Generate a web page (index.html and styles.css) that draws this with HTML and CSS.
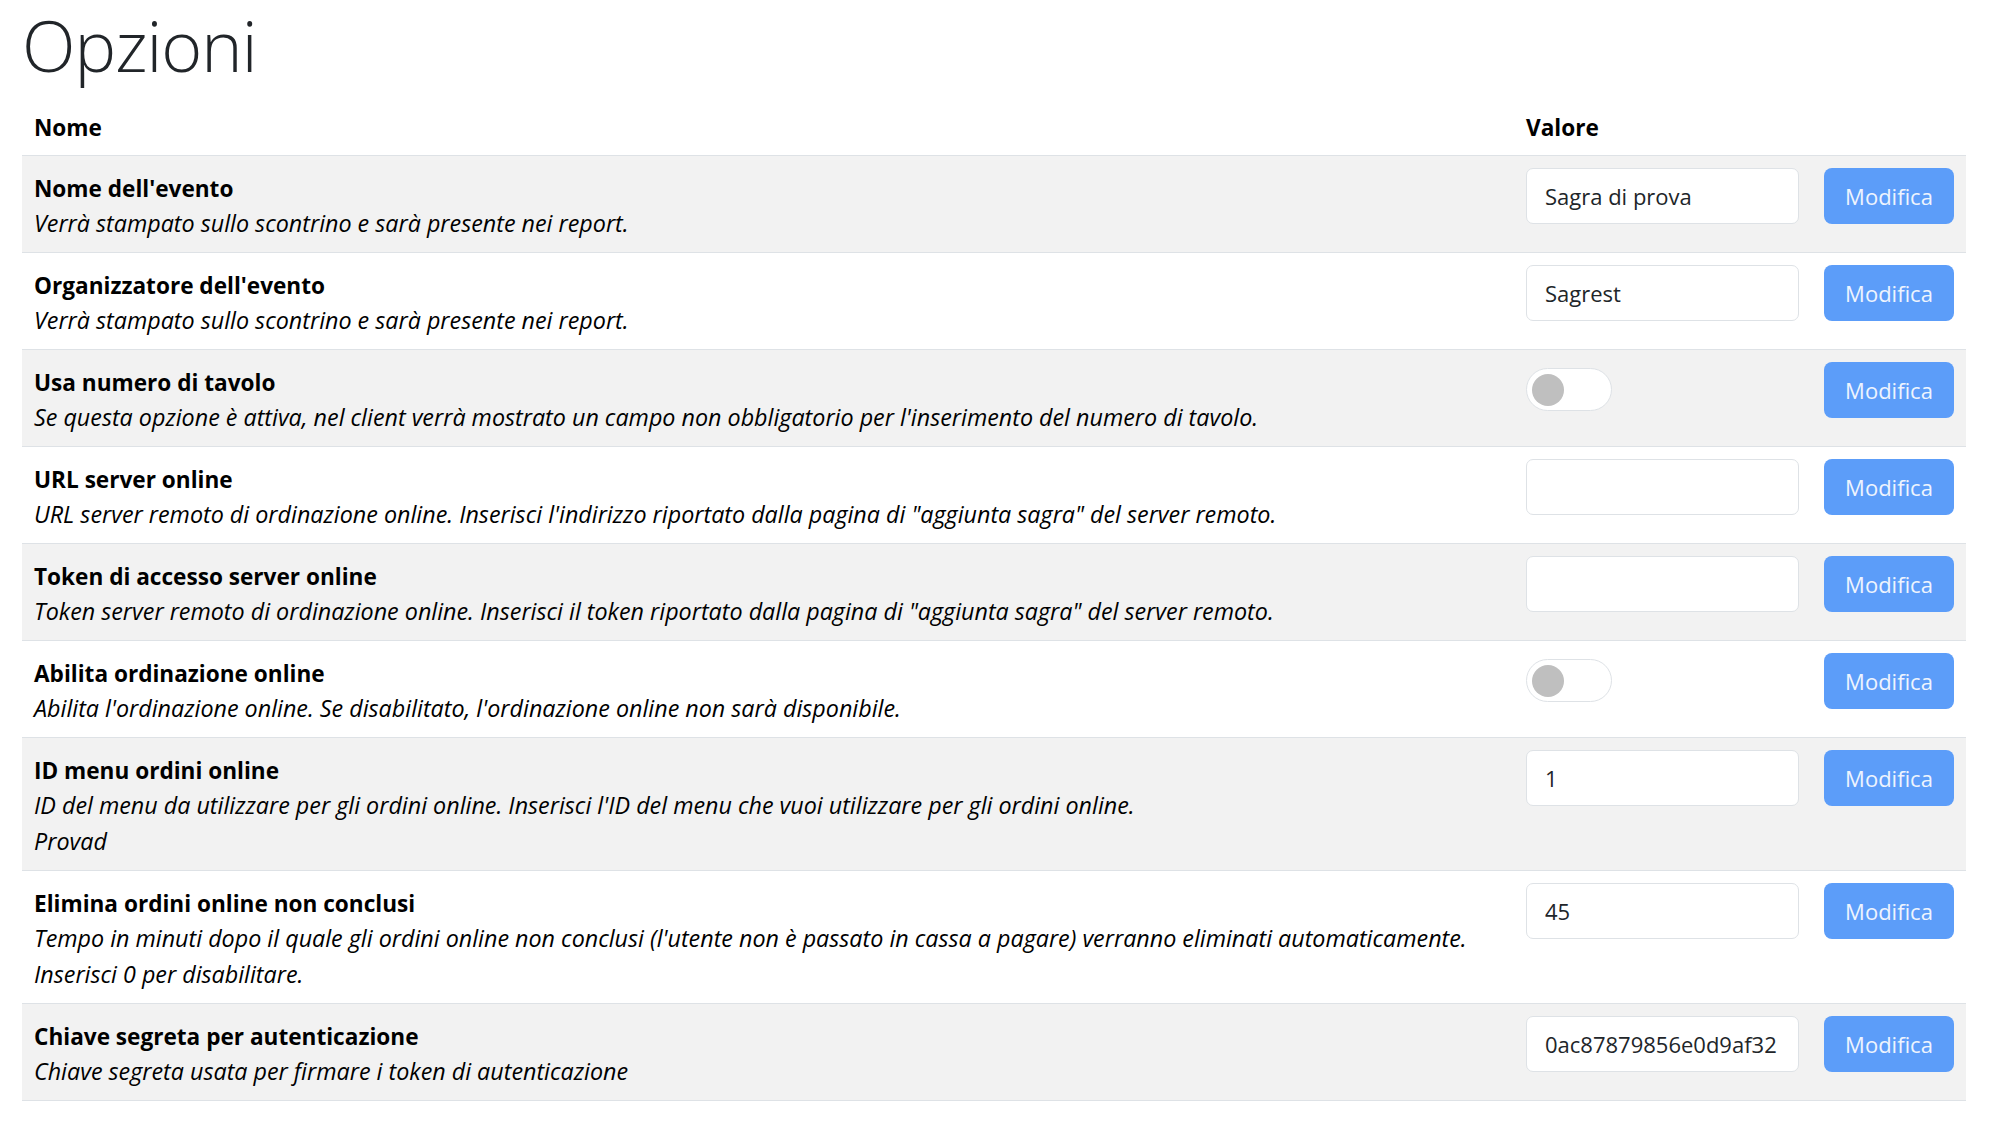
FILE: index.html
```html
<!DOCTYPE html>
<html lang="it">
<head>
<meta charset="utf-8">
<title>Opzioni</title>
<link rel="stylesheet" href="styles.css">
</head>
<body>
<main class="page">
  <h1 class="title">Opzioni</h1>
  <table class="options">
    <thead>
      <tr><th class="col-name"><div class="head">Nome</div></th><th class="col-value"><div class="head">Valore</div></th></tr>
    </thead>
    <tbody>
      <tr class="odd">
        <td><div class="opt-name">Nome dell'evento</div><div class="opt-desc">Verrà stampato sullo scontrino e sarà presente nei report.</div></td>
        <td><div class="value"><input class="field" type="text" value="Sagra di prova"><button class="btn">Modifica</button></div></td>
      </tr>
      <tr>
        <td><div class="opt-name">Organizzatore dell'evento</div><div class="opt-desc">Verrà stampato sullo scontrino e sarà presente nei report.</div></td>
        <td><div class="value"><input class="field" type="text" value="Sagrest"><button class="btn">Modifica</button></div></td>
      </tr>
      <tr class="odd">
        <td><div class="opt-name">Usa numero di tavolo</div><div class="opt-desc">Se questa opzione è attiva, nel client verrà mostrato un campo non obbligatorio per l'inserimento del numero di tavolo.</div></td>
        <td><div class="value"><span class="switch-cell"><span class="switch"><span class="knob"></span></span></span><button class="btn">Modifica</button></div></td>
      </tr>
      <tr>
        <td><div class="opt-name">URL server online</div><div class="opt-desc">URL server remoto di ordinazione online. Inserisci l'indirizzo riportato dalla pagina di "aggiunta sagra" del server remoto.</div></td>
        <td><div class="value"><input class="field" type="text" value=""><button class="btn">Modifica</button></div></td>
      </tr>
      <tr class="odd">
        <td><div class="opt-name">Token di accesso server online</div><div class="opt-desc">Token server remoto di ordinazione online. Inserisci il token riportato dalla pagina di "aggiunta sagra" del server remoto.</div></td>
        <td><div class="value"><input class="field" type="text" value=""><button class="btn">Modifica</button></div></td>
      </tr>
      <tr>
        <td><div class="opt-name">Abilita ordinazione online</div><div class="opt-desc">Abilita l'ordinazione online. Se disabilitato, l'ordinazione online non sarà disponibile.</div></td>
        <td><div class="value"><span class="switch-cell"><span class="switch"><span class="knob"></span></span></span><button class="btn">Modifica</button></div></td>
      </tr>
      <tr class="odd">
        <td><div class="opt-name">ID menu ordini online</div><div class="opt-desc">ID del menu da utilizzare per gli ordini online. Inserisci l'ID del menu che vuoi utilizzare per gli ordini online.</div><div class="opt-desc">Provad</div></td>
        <td><div class="value"><input class="field" type="text" value="1"><button class="btn">Modifica</button></div></td>
      </tr>
      <tr>
        <td><div class="opt-name">Elimina ordini online non conclusi</div><div class="opt-desc">Tempo in minuti dopo il quale gli ordini online non conclusi (l'utente non è passato in cassa a pagare) verranno eliminati automaticamente.</div><div class="opt-desc">Inserisci 0 per disabilitare.</div></td>
        <td><div class="value"><input class="field" type="text" value="45"><button class="btn">Modifica</button></div></td>
      </tr>
      <tr class="odd">
        <td><div class="opt-name">Chiave segreta per autenticazione</div><div class="opt-desc">Chiave segreta usata per firmare i token di autenticazione</div></td>
        <td><div class="value"><input class="field" type="text" value="0ac87879856e0d9af32"><button class="btn">Modifica</button></div></td>
      </tr>
    </tbody>
  </table>
</main>
</body>
</html>
```
FILE: styles.css
```css
html, body {
  margin: 0;
  padding: 0;
  background: #fff;
}
body {
  font-family: "Open Sans", "Noto Sans", sans-serif;
  font-size: 22px;
  line-height: 36px;
  color: #000;
}
.page {
  padding: 0 36px 0 22px;
}
.title {
  margin: 0;
  padding-top: 0;
  height: 95px;
  font-weight: 300;
  font-size: 70px;
  line-height: 90px;
  color: #212529;
  letter-spacing: -1px;
}
.options {
  width: 100%;
  border-collapse: collapse;
}
.options th {
  text-align: left;
  font-weight: 700;
  font-size: 22.6px;
  padding: 12px;
  border-bottom: 1px solid #dee2e6;
}
.head {
  padding-top: 3px;
  margin-bottom: -3px;
}
.col-value {
  width: 428px;
}
.options td {
  padding: 12px;
  vertical-align: top;
  border-bottom: 1px solid #dee2e6;
}
.options tr.odd td {
  background: #f2f2f2;
}
.opt-name {
  font-weight: 700;
  font-size: 22.6px;
  padding-top: 3px;
  margin-bottom: -3px;
}
.opt-desc {
  font-style: italic;
  font-size: 23.3px;
  padding-top: 1px;
  margin-bottom: -1px;
}
.value {
  display: flex;
  align-items: flex-start;
  gap: 25px;
}
.field {
  box-sizing: border-box;
  width: 273px;
  height: 56px;
  margin: 0;
  padding: 9px 18px;
  border: 1px solid #dee2e6;
  border-radius: 7px;
  background: #fff;
  font-family: "Open Sans", "Noto Sans", sans-serif;
  font-size: 22px;
  color: #212529;
  outline: none;
}
.switch-cell {
  width: 273px;
  height: 56px;
  display: block;
  padding-top: 6px;
  box-sizing: border-box;
}
.switch {
  display: block;
  box-sizing: border-box;
  width: 86px;
  height: 43px;
  border: 1px solid #dee2e6;
  border-radius: 22px;
  background: #fff;
  padding: 5px;
}
.knob {
  display: block;
  width: 32px;
  height: 32px;
  border-radius: 50%;
  background: #bfbfbf;
}
.btn {
  box-sizing: border-box;
  width: 130px;
  height: 56px;
  margin: 0;
  padding: 0;
  border: none;
  border-radius: 8px;
  background: #5c9df9;
  color: #eef4fe;
  font-family: "Open Sans", "Noto Sans", sans-serif;
  font-size: 22px;
}
```
